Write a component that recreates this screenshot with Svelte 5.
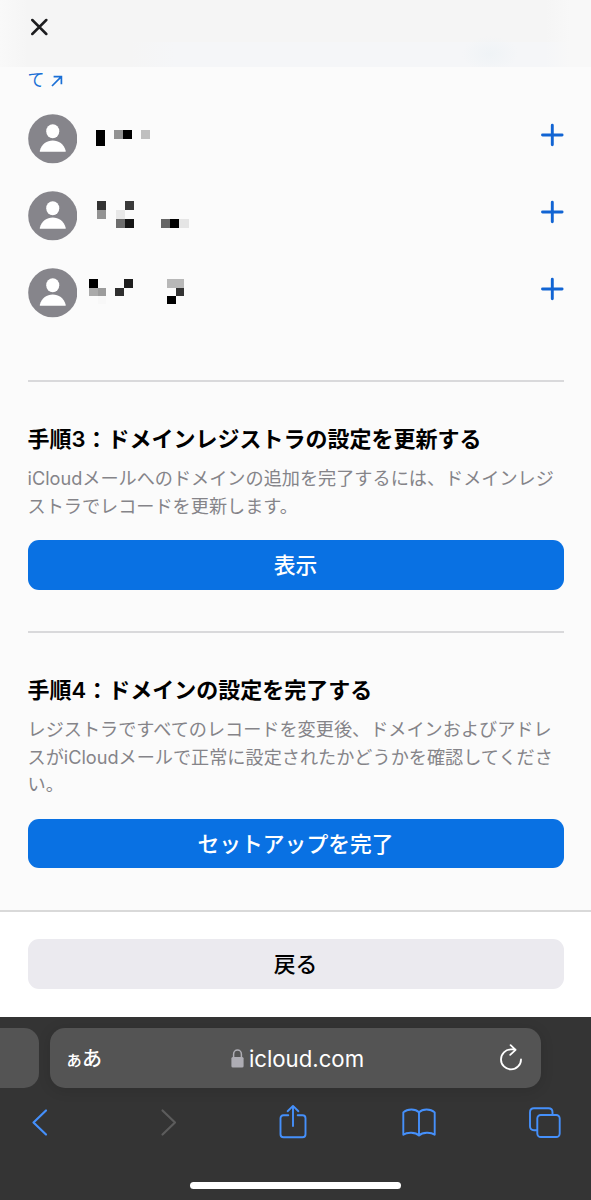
<script>
  // masked names, each block is [x, y, width, height, color]
  const members = [
    {
      id: 1,
      blocks: [
        [10, 16.3, 9, 15.4, '#000'],
        [28, 16.3, 9, 8.2, '#929292'],
        [37, 16.3, 9, 8.2, '#000'],
        [55, 16.3, 9, 8.2, '#bfbfbf']
      ]
    },
    {
      id: 2,
      blocks: [
        [11, 9.7, 9.3, 9, '#333'],
        [38.7, 9.7, 9.3, 9, '#3a3a3a'],
        [11, 18.7, 9.3, 9, '#939393'],
        [29.7, 18.7, 9, 9, '#e8e8e8'],
        [29.7, 27.7, 9, 9, '#6d6d6d'],
        [38.7, 27.7, 9.3, 9, '#151515'],
        [75, 27.7, 9.2, 9, '#656565'],
        [84.2, 27.7, 9.1, 9, '#000'],
        [93.3, 27.7, 9.5, 9, '#e5e5e5']
      ]
    },
    {
      id: 3,
      blocks: [
        [3.3, 11.4, 8.7, 8.2, '#000'],
        [38, 11.4, 8.7, 8.2, '#1e1e1e'],
        [81, 11.4, 17, 8.2, '#b8b8b8'],
        [3.3, 19.6, 8.7, 8.2, '#aaa'],
        [12, 19.6, 8.3, 8.2, '#9c9c9c'],
        [29.3, 19.6, 8.7, 8.2, '#2f2f2f'],
        [89.7, 19.6, 8.3, 8.2, '#333'],
        [12, 27.8, 8.3, 8.2, '#f8f8f8'],
        [81, 27.8, 8.7, 8.2, '#000']
      ]
    }
  ];

  const steps = [
    {
      title: '手順3：ドメインレジストラの設定を更新する',
      lines: ['iCloudメールへのドメインの追加を完了するには、ドメインレジ', 'ストラでレコードを更新します。'],
      action: '表示'
    },
    {
      title: '手順4：ドメインの設定を完了する',
      lines: [
        'レジストラですべてのレコードを変更後、ドメインおよびアドレ',
        'スがiCloudメールで正常に設定されたかどうかを確認してくださ',
        'い。'
      ],
      action: 'セットアップを完了'
    }
  ];
</script>

<div class="screen">
  <header>
    <button class="icon-btn" aria-label="閉じる">
      <svg width="18" height="18" viewBox="0 0 18 18">
        <path d="M2.3 2 16.3 16M16.3 2 2.3 16" fill="none" stroke="#1d1d1f" stroke-width="2.5" stroke-linecap="round" />
      </svg>
    </button>
  </header>

  <main>
    <a class="more" href="#more">
      <span>て</span>
      <svg width="12" height="12" viewBox="0 0 12 12">
        <path d="M1 11 10.3 1.7M2.6 1.6H10.4V9.2" fill="none" stroke="currentColor" stroke-width="1.7" />
      </svg>
    </a>

    <ul>
      {#each members as member (member.id)}
        <li>
          <svg class="avatar" viewBox="0 0 50 50">
            <circle cx="25" cy="25" r="24.8" fill="#86858b" />
            <ellipse cx="25" cy="17.4" rx="6.6" ry="7.1" fill="#fff" />
            <path d="M12.3 38.2C11.9 38.2 11.8 37.6 12 36.8 13.8 30.4 19 26.8 25 26.8S36.2 30.4 38 36.8C38.2 37.6 38.1 38.2 37.7 38.2Z" fill="#fff" />
          </svg>
          <svg class="masked" width="110" height="49" viewBox="0 0 110 49">
            {#each member.blocks as [x, y, width, height, fill]}
              <rect {x} {y} {width} {height} {fill} />
            {/each}
          </svg>
          <button class="icon-btn add" aria-label="追加">
            <svg width="24" height="24" viewBox="0 0 24 24">
              <path d="M12.3 2.2V21.8M2.5 12H22.1" fill="none" stroke="#1164d3" stroke-width="2.9" stroke-linecap="round" />
            </svg>
          </button>
        </li>
      {/each}
    </ul>

    {#each steps as step}
      <section>
        <h2>{step.title}</h2>
        <p>
          {#each step.lines as line}
            <span>{line}</span>
          {/each}
        </p>
        <button class="btn btn-primary">{step.action}</button>
      </section>
    {/each}
  </main>

  <footer>
    <button class="btn btn-secondary">戻る</button>
  </footer>

  <nav>
    <div class="tabs">
      <div class="prev-tab"></div>
      <div class="address">
        <span class="reader"><small>ぁ</small>あ</span>
        <span class="host">
          <svg width="13" height="19" viewBox="0 0 13 19">
            <path d="M2.6 9V5.3a3.9 4.2 0 0 1 7.8 0V9" fill="none" stroke="#aeadb4" stroke-width="1.5" />
            <rect x="0.4" y="8" width="12.2" height="10.5" rx="1.5" fill="#aeadb4" />
          </svg>
          icloud.com
        </span>
        <svg width="24" height="28" viewBox="0 0 24 28">
          <path d="M22 15.4A10 10 0 1 1 12 5.4H16.4M11.6 1.2 16.6 5.8 11.2 10.8" fill="none" stroke="#fff" stroke-width="1.8" stroke-linecap="round" stroke-linejoin="round" />
        </svg>
      </div>
    </div>

    <div class="toolbar">
      <svg width="34" height="36" viewBox="0 0 34 36">
        <path d="M22 6.5 9.5 18.5 22 30.5" fill="none" stroke="#4590fb" stroke-width="2.2" stroke-linecap="round" stroke-linejoin="round" />
      </svg>
      <svg width="34" height="36" viewBox="0 0 34 36">
        <path d="M12.5 6.5 25 18.5 12.5 30.5" fill="none" stroke="#5c5c5c" stroke-width="2.2" stroke-linecap="round" stroke-linejoin="round" />
      </svg>
      <svg width="34" height="36" viewBox="0 0 34 36">
        <path d="M12.3 11.3H7.5Q4.5 11.3 4.5 14.3V30.3Q4.5 33.3 7.5 33.3H26.5Q29.5 33.3 29.5 30.3V14.3Q29.5 11.3 26.5 11.3H21.7M17 22V1.9M11.6 7.2 17 1.9 22.4 7.2" fill="none" stroke="#4590fb" stroke-width="1.9" stroke-linecap="round" stroke-linejoin="round" />
      </svg>
      <svg width="34" height="36" viewBox="0 0 34 36">
        <path d="M17 8.4C13.5 4.6 5.5 4.6 1.3 8.4V30.8C5 28 13.5 28 17 31.6 20.5 28 29 28 32.7 30.8V8.4C28.5 4.6 20.5 4.6 17 8.4ZV31" fill="none" stroke="#4590fb" stroke-width="1.9" stroke-linejoin="round" />
      </svg>
      <svg width="34" height="36" viewBox="0 0 34 36">
        <path d="M9 26.2H6Q2 26.2 2 22.2V8.2Q2 4.2 6 4.2H20.5Q24.5 4.2 24.5 8.2V11" fill="none" stroke="#4590fb" stroke-width="1.9" />
        <rect x="9.3" y="11" width="22.4" height="22" rx="3.5" fill="none" stroke="#4590fb" stroke-width="1.9" />
      </svg>
    </div>

    <div class="home-bar"></div>
  </nav>
</div>

<style>
  :global(body) {
    margin: 0;
  }

  .screen {
    display: flex;
    flex-direction: column;
    width: 591px;
    height: 1200px;
    overflow: hidden;
    background: #fbfbfb;
    color: #000;
    font-family: Inter, 'Noto Sans CJK JP', sans-serif;
  }

  header {
    box-sizing: border-box;
    flex: none;
    height: 67px;
    padding: 18px 30px;
    background:
      radial-gradient(ellipse 28px 18px at 490px 54px, #eff3f6, transparent),
      linear-gradient(90deg, #f9f9f9, transparent 28px, transparent 545px, #f8f8f8 570px),
      linear-gradient(90deg, transparent 130px, #f5f6f8 175px) 0 42px / 100% 25px no-repeat,
      #f5f5f5;
  }

  .icon-btn {
    display: flex;
    padding: 0;
    border: none;
    background: none;
  }

  main {
    box-sizing: border-box;
    flex: none;
    height: 843px;
    padding: 0 27.5px;
  }

  .more {
    display: flex;
    align-items: center;
    gap: 6px;
    height: 24px;
    margin-bottom: 3px;
    color: #1a6fd6;
    font-size: 17px;
    text-decoration: none;
  }

  .more span {
    padding-bottom: 2px;
  }

  .more svg {
    margin-top: 4px;
  }

  ul {
    display: flex;
    flex-direction: column;
    gap: 27.2px;
    margin: 0;
    padding: 20px 0 61.6px;
    list-style: none;
  }

  li {
    display: flex;
    height: 50px;
  }

  .avatar {
    width: 49.5px;
    height: 49.5px;
  }

  .masked {
    margin-left: 9px;
    shape-rendering: crispEdges;
  }

  .add {
    align-self: flex-start;
    margin: 9px 0 0 auto;
  }

  section {
    box-sizing: border-box;
    height: 251px;
    border-top: 2px solid #d9d9db;
  }

  h2 {
    margin: 0;
    padding-top: 41px;
    font-size: 22px;
    font-weight: 600;
    line-height: 32px;
    white-space: nowrap;
  }

  p {
    margin: 10px 0 20px;
    color: #858489;
    font-size: 18.15px;
    font-weight: 400;
    line-height: 27.6px;
    white-space: nowrap;
  }

  p span {
    display: block;
  }

  .btn {
    display: block;
    width: 100%;
    height: 49.5px;
    padding: 0 0 3px;
    border: none;
    border-radius: 11px;
    font-family: inherit;
    font-size: 21.8px;
    font-weight: 500;
  }

  .btn-primary {
    background: #0971e3;
    color: #fff;
  }

  .btn-secondary {
    background: #ebeaef;
    color: #000;
  }

  footer {
    box-sizing: border-box;
    flex: none;
    height: 107px;
    padding: 27px 27.5px 0;
    border-top: 2px solid #d9d9d9;
    background: #fff;
  }

  nav {
    flex: 1;
    background: #343434;
  }

  .tabs {
    display: flex;
    gap: 11px;
    padding-top: 11px;
  }

  .prev-tab {
    width: 39px;
    height: 60px;
    border-radius: 0 15px 15px 0;
    background: #545454;
  }

  .address {
    box-sizing: border-box;
    display: flex;
    align-items: center;
    justify-content: space-between;
    width: 491px;
    height: 60px;
    padding: 0 18px 0 15px;
    border-radius: 15px;
    background: #545454;
    box-shadow: 0 2px 14px rgba(0, 0, 0, 0.12);
    color: #fff;
  }

  .reader {
    width: 31px;
    padding-bottom: 2px;
    font-size: 20px;
    font-weight: 500;
    white-space: nowrap;
  }

  .reader small {
    margin-right: -1px;
    font-size: 18px;
  }

  .host {
    display: flex;
    align-items: center;
    gap: 5px;
    font-size: 22.2px;
  }

  .toolbar {
    display: flex;
    justify-content: space-between;
    padding: 16px 29px 0 24px;
  }

  .home-bar {
    width: 211px;
    height: 7px;
    margin: 42px auto 0;
    border-radius: 4px;
    background: #fff;
  }
</style>
